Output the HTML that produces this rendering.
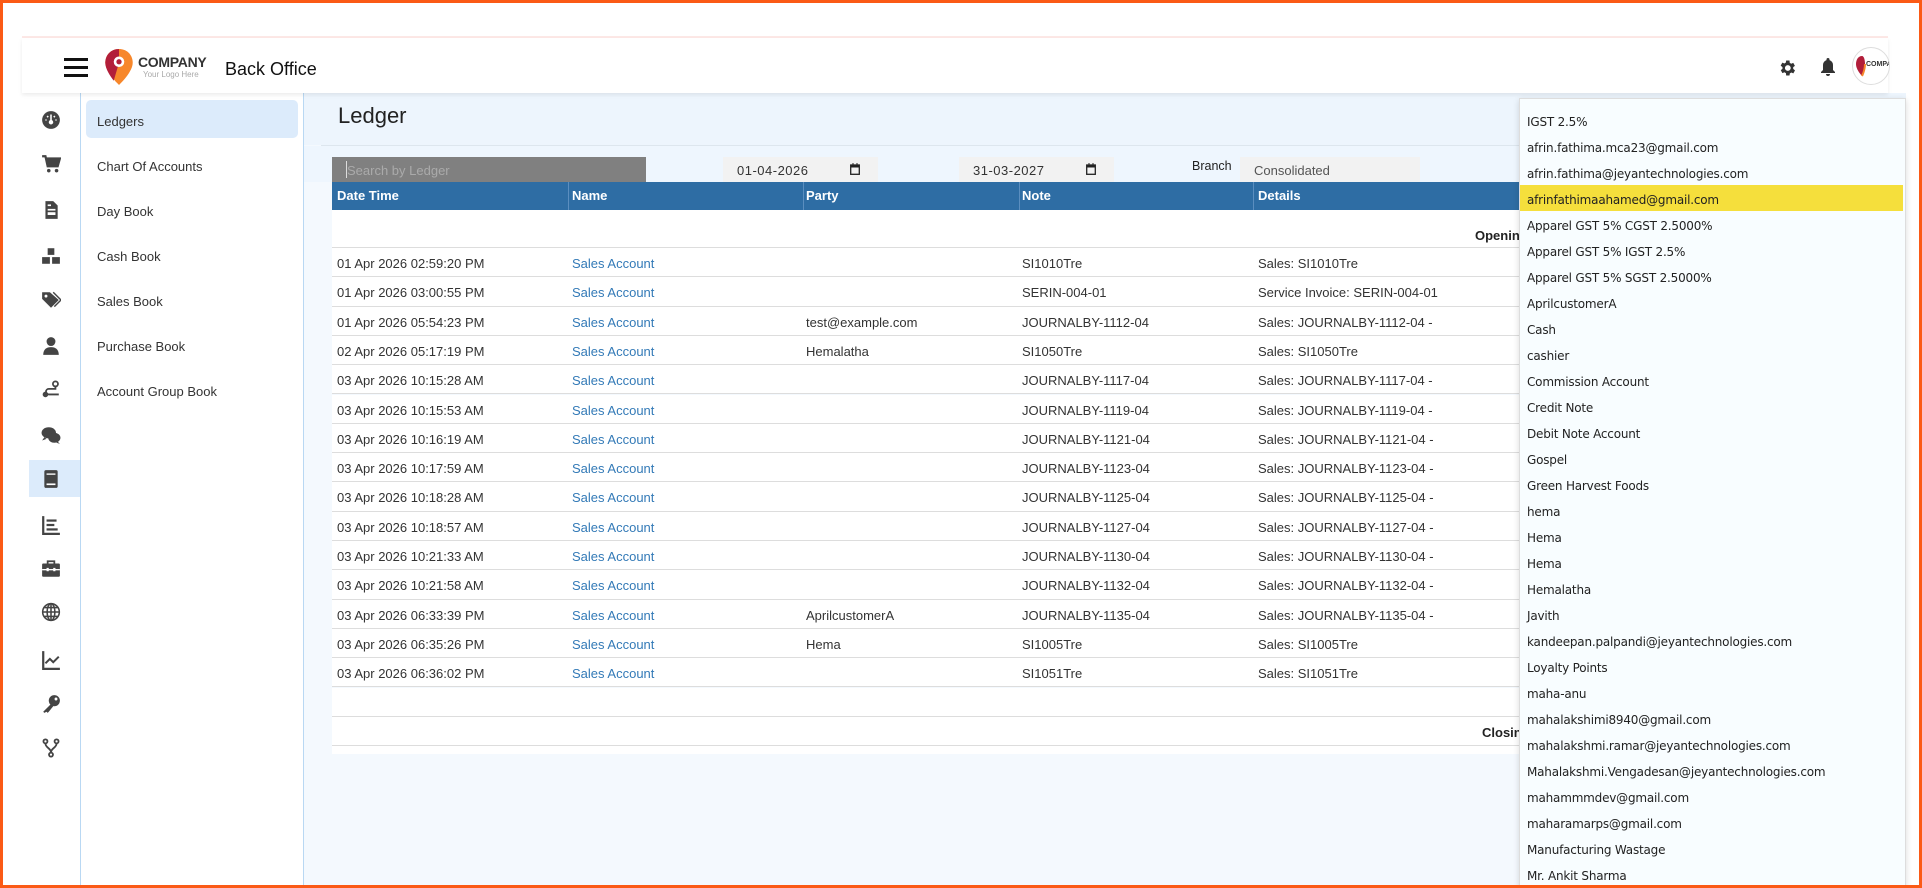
<!DOCTYPE html>
<html><head><meta charset="utf-8"><style>
*{margin:0;padding:0;box-sizing:border-box}
body{width:1922px;height:888px;overflow:hidden;background:#fff;font-family:"Liberation Sans",sans-serif;font-size:13px;color:#333;position:relative}
.a{position:absolute}
.frame{position:absolute;left:0;top:0;width:1922px;height:888px;border:3px solid #fb5a16;pointer-events:none;z-index:50}
.ic{position:absolute;left:41px;width:20px;height:20px}
.sub{position:absolute;left:97px;font-size:13px;color:#333}
.row{position:absolute;left:332px;width:1574px;height:29.3px;border-bottom:1px solid #ddd;background:#fff}
.row span{position:absolute;top:8px;white-space:nowrap}
.lnk{color:#337ab7}
.dd{position:absolute;left:1519px;top:98px;width:387px;height:790px;background:#f8fdff;border:1px solid #ddd;box-shadow:0 2px 6px rgba(0,0,0,.15);z-index:10;font-family:"DejaVu Sans",sans-serif;font-size:12px;color:#222;letter-spacing:-.2px}
.dd div{position:absolute;left:7px;white-space:nowrap}
</style></head><body>
<div class="frame"></div>
<div class="a" style="left:22px;top:36px;width:1866px;height:2px;background:#fde8e6"></div>
<div class="a" style="left:22px;top:38px;width:1866px;height:55px;background:#fff;box-shadow:0 2px 4px rgba(0,0,0,.08);z-index:2"></div>
<div class="a" style="left:64px;top:58px;width:24px;height:3px;background:#111;z-index:3;box-shadow:0 8px 0 #111,0 16px 0 #111"></div>
<svg class="a" style="left:104px;top:48px;z-index:3" width="30" height="38" viewBox="0 0 28 36"><path d="M14 1C6 1 1 7 1 14c0 9 13 21 13 21s13-12 13-21C27 7 22 1 14 1z" fill="#f7872b"/><path d="M14 1C6 1 1 7 1 14c0 6 5 13 8 17L14 14z" fill="#b21e3a"/><circle cx="14" cy="13" r="5" fill="#fff"/><circle cx="14" cy="13" r="2.5" fill="#b21e3a"/></svg>
<div class="a" style="left:138px;top:54px;font-weight:bold;font-size:14px;color:#333;z-index:3;letter-spacing:-.3px">COMPANY</div>
<div class="a" style="left:143px;top:70px;font-size:8px;color:#aaa;z-index:3">Your Logo Here</div>
<div class="a" style="left:225px;top:59px;font-size:18px;color:#111;z-index:3">Back Office</div>
<svg class="a" style="left:1777px;top:58px;z-index:3" width="20" height="20" viewBox="0 0 24 24"><path fill="#333" d="M19.4 13a7.5 7.5 0 000-2l2.1-1.6-2-3.5-2.5 1a7 7 0 00-1.7-1L15 3h-4l-.4 2.6a7 7 0 00-1.7 1l-2.5-1-2 3.5L6.6 11a7.5 7.5 0 000 2l-2.1 1.6 2 3.5 2.5-1a7 7 0 001.7 1L11 21h4l.4-2.6a7 7 0 001.7-1l2.5 1 2-3.5zM13 15.5a3.5 3.5 0 110-7 3.5 3.5 0 010 7z"/></svg>
<svg class="a" style="left:1820px;top:57px;z-index:3" width="16" height="20" viewBox="0 0 16 20"><path fill="#333" d="M8 1a1.5 1.5 0 011.5 1.5v.6A5 5 0 0113 8v5l2 2v1H1v-1l2-2V8a5 5 0 013.5-4.9v-.6A1.5 1.5 0 018 1zM6 17h4a2 2 0 01-4 0z"/></svg>
<div class="a" style="left:1852px;top:47px;width:38px;height:38px;border-radius:50%;border:1px solid #ddd;background:#fff;z-index:3;overflow:hidden"><svg width="36" height="36"><path d="M9 8c-4 0-6 4-6 8 0 6 6 12 6 12s3-6 3-12c0-4-1-8-3-8z" fill="#b21e3a"/><path d="M9 28s3-6 3-12" stroke="#f7872b" stroke-width="2" fill="none"/><text x="13" y="18" font-size="7" font-weight="bold" fill="#333" font-family="Liberation Sans">COMPANY</text></svg></div>
<div class="a" style="left:80px;top:93px;width:1px;height:795px;background:#b9d8f3"></div>
<div class="a" style="left:303px;top:93px;width:1px;height:795px;background:#b9d8f3"></div>
<div class="a" style="left:86px;top:100px;width:212px;height:38px;background:#dcebfb;border-radius:5px"></div>
<div class="a" style="left:29px;top:460px;width:51px;height:37px;background:#dcebfb"></div>
<div class="sub" style="top:114px">Ledgers</div>
<div class="sub" style="top:159px">Chart Of Accounts</div>
<div class="sub" style="top:204px">Day Book</div>
<div class="sub" style="top:249px">Cash Book</div>
<div class="sub" style="top:294px">Sales Book</div>
<div class="sub" style="top:339px">Purchase Book</div>
<div class="sub" style="top:384px">Account Group Book</div>
<svg class="ic" style="top:110px" viewBox="0 0 18 18"><circle cx="9" cy="9" r="8" fill="#444"/><circle cx="9" cy="11" r="2" fill="#fff"/><path d="M9 11V4M4 9h1M13 9h1M5.5 5.5l1 1M12.5 5.5l-1 1" stroke="#fff" stroke-width="1.4"/></svg>
<svg class="ic" style="top:154px" viewBox="0 0 18 18"><path d="M1 2h3l2 9h9l2-7H5" fill="none" stroke="#444" stroke-width="2"/><path d="M5 4h12l-2 7H6z" fill="#444"/><circle cx="7" cy="15" r="1.6" fill="#444"/><circle cx="14" cy="15" r="1.6" fill="#444"/></svg>
<svg class="ic" style="top:200px" viewBox="0 0 18 18"><path d="M4 1h7l4 4v12H4z" fill="#444"/><rect x="6" y="8" width="7" height="1.5" fill="#fff"/><rect x="6" y="11" width="7" height="2.5" fill="#fff"/><rect x="6" y="4" width="3" height="1.5" fill="#fff"/></svg>
<svg class="ic" style="top:246px" viewBox="0 0 18 18"><rect x="6" y="2" width="6" height="6" fill="#444"/><rect x="1" y="10" width="7" height="6" fill="#444"/><rect x="10" y="10" width="7" height="6" fill="#444"/></svg>
<svg class="ic" style="top:290px" viewBox="0 0 18 18"><path d="M1 2v6l8 8 7-7-8-7z" fill="#444"/><circle cx="4.5" cy="5.5" r="1.3" fill="#fff"/><path d="M11 2l7 7-6 6" fill="none" stroke="#444" stroke-width="1.3"/></svg>
<svg class="ic" style="top:336px" viewBox="0 0 18 18"><circle cx="9" cy="5" r="4" fill="#444"/><path d="M2 17c0-5 3-7 7-7s7 2 7 7z" fill="#444"/></svg>
<svg class="ic" style="top:380px" viewBox="0 0 18 18"><circle cx="13" cy="3.5" r="2.3" fill="none" stroke="#444" stroke-width="1.6"/><path d="M13 6v2H7a2.5 2.5 0 000 5h9" fill="none" stroke="#444" stroke-width="1.6"/><circle cx="4" cy="13" r="2.5" fill="#444"/></svg>
<svg class="ic" style="top:425px" viewBox="0 0 18 18"><ellipse cx="7" cy="7" rx="6.5" ry="5" fill="#444"/><ellipse cx="12" cy="11.5" rx="5.5" ry="4.5" fill="#444"/><path d="M3 11l-2 3 4-1.5z M15 15l2 2-3-1z" fill="#444"/></svg>
<svg class="ic" style="top:469px" viewBox="0 0 18 18"><rect x="3" y="1" width="12" height="16" rx="1.5" fill="#444"/><rect x="5" y="13" width="8" height="1.5" fill="#fff"/><rect x="5" y="4" width="8" height="1.2" fill="#fff"/></svg>
<svg class="ic" style="top:515px" viewBox="0 0 18 18"><path d="M2 1v16h15" fill="none" stroke="#444" stroke-width="2"/><rect x="5" y="4" width="9" height="2" fill="#444"/><rect x="5" y="8" width="7" height="2" fill="#444"/><rect x="5" y="12" width="10" height="2" fill="#444"/></svg>
<svg class="ic" style="top:559px" viewBox="0 0 18 18"><path d="M6 4V2h6v2" fill="none" stroke="#444" stroke-width="1.6"/><rect x="1" y="4" width="16" height="12" rx="1" fill="#444"/><rect x="1" y="9" width="16" height="1.2" fill="#fff"/><rect x="5" y="8" width="2" height="3" fill="#fff"/><rect x="11" y="8" width="2" height="3" fill="#fff"/></svg>
<svg class="ic" style="top:602px" viewBox="0 0 18 18"><g fill="none" stroke="#444" stroke-width="1.4"><circle cx="9" cy="9" r="7.5"/><ellipse cx="9" cy="9" rx="3.5" ry="7.5"/><path d="M1.5 9h15M3 5h12M3 13h12M9 1.5v15"/></g></svg>
<svg class="ic" style="top:650px" viewBox="0 0 18 18"><path d="M2 1v16h15" fill="none" stroke="#444" stroke-width="2"/><path d="M4 12l4-4 3 3 5-5" fill="none" stroke="#444" stroke-width="1.8"/></svg>
<svg class="ic" style="top:694px" viewBox="0 0 18 18"><circle cx="12" cy="6" r="5" fill="#444"/><path d="M9 9l-7 7 1 1 2-1 1 1 1-1 4-5z" fill="#444"/><circle cx="13.5" cy="4.5" r="1.3" fill="#fff"/></svg>
<svg class="ic" style="top:738px" viewBox="0 0 18 18"><g fill="none" stroke="#444" stroke-width="1.6"><circle cx="4" cy="3" r="1.8"/><circle cx="14" cy="3" r="1.8"/><circle cx="9" cy="15" r="1.8"/><path d="M4 5c0 4 5 4 5 8M14 5c0 4-5 4-5 8"/></g></svg>
<div class="a" style="left:304px;top:93px;width:1602px;height:795px;background:#f4f9fe"></div>
<div class="a" style="left:304px;top:93px;width:1602px;height:52px;background:#edf5fd"></div>
<div class="a" style="left:338px;top:103px;font-size:22px;color:#222">Ledger</div>
<div class="a" style="left:321px;top:145px;width:1585px;height:1px;background:#dde6ee"></div>
<div class="a" style="left:304px;top:146px;width:1602px;height:36px;background:#eef6fe"></div>
<div class="a" style="left:332px;top:157px;width:314px;height:25px;background:#808080"></div>
<div class="a" style="left:346px;top:161px;width:1px;height:17px;background:#ddd"></div>
<div class="a" style="left:347px;top:163px;color:#aaa;font-size:13px">Search by Ledger</div>
<div class="a" style="left:723px;top:157px;width:155px;height:25px;background:#f2f2f2"></div>
<div class="a" style="left:737px;top:163px;font-size:13px;color:#333;letter-spacing:.5px">01-04-2026</div>
<svg class="a" style="left:850px;top:163px" width="10" height="12" viewBox="0 0 10 12"><rect x=".7" y="2" width="8.6" height="9.3" fill="none" stroke="#222" stroke-width="1.3"/><rect x=".7" y="2" width="8.6" height="2.5" fill="#222"/><rect x="2.5" y="0" width="1" height="2" fill="#222"/><rect x="6.5" y="0" width="1" height="2" fill="#222"/></svg>
<div class="a" style="left:959px;top:157px;width:155px;height:25px;background:#f2f2f2"></div>
<div class="a" style="left:973px;top:163px;font-size:13px;color:#333;letter-spacing:.5px">31-03-2027</div>
<svg class="a" style="left:1086px;top:163px" width="10" height="12" viewBox="0 0 10 12"><rect x=".7" y="2" width="8.6" height="9.3" fill="none" stroke="#222" stroke-width="1.3"/><rect x=".7" y="2" width="8.6" height="2.5" fill="#222"/><rect x="2.5" y="0" width="1" height="2" fill="#222"/><rect x="6.5" y="0" width="1" height="2" fill="#222"/></svg>
<div class="a" style="left:1192px;top:159px;font-size:12.5px;color:#222">Branch</div>
<div class="a" style="left:1240px;top:157px;width:180px;height:25px;background:#f2f2f2"></div>
<div class="a" style="left:1254px;top:163px;font-size:13px;color:#555">Consolidated</div>
<div class="a" style="left:332px;top:182px;width:1574px;height:28px;background:#2e6da4;color:#fff;font-weight:bold;font-size:13px">
<span class="a" style="left:5px;top:6px">Date Time</span>
<span class="a" style="left:236px;top:0;width:1px;height:28px;background:#5b8ebf"></span><span class="a" style="left:240px;top:6px">Name</span>
<span class="a" style="left:471px;top:0;width:1px;height:28px;background:#5b8ebf"></span><span class="a" style="left:474px;top:6px">Party</span>
<span class="a" style="left:687px;top:0;width:1px;height:28px;background:#5b8ebf"></span><span class="a" style="left:690px;top:6px">Note</span>
<span class="a" style="left:921px;top:0;width:1px;height:28px;background:#5b8ebf"></span><span class="a" style="left:926px;top:6px">Details</span>
</div>
<div class="row" style="top:210px;height:38px"><span style="left:1143px;top:18px;font-weight:bold;color:#222">Opening</span></div>
<div class="row" style="top:248px"><span style="left:5px">01 Apr 2026 02:59:20 PM</span><span class="lnk" style="left:240px">Sales Account</span><span style="left:690px">SI1010Tre</span><span style="left:926px">Sales: SI1010Tre</span></div>
<div class="row" style="top:277.3px"><span style="left:5px">01 Apr 2026 03:00:55 PM</span><span class="lnk" style="left:240px">Sales Account</span><span style="left:690px">SERIN-004-01</span><span style="left:926px">Service Invoice: SERIN-004-01</span></div>
<div class="row" style="top:306.6px"><span style="left:5px">01 Apr 2026 05:54:23 PM</span><span class="lnk" style="left:240px">Sales Account</span><span style="left:474px">test@example.com</span><span style="left:690px">JOURNALBY-1112-04</span><span style="left:926px">Sales: JOURNALBY-1112-04 -</span></div>
<div class="row" style="top:335.9px"><span style="left:5px">02 Apr 2026 05:17:19 PM</span><span class="lnk" style="left:240px">Sales Account</span><span style="left:474px">Hemalatha</span><span style="left:690px">SI1050Tre</span><span style="left:926px">Sales: SI1050Tre</span></div>
<div class="row" style="top:365.2px"><span style="left:5px">03 Apr 2026 10:15:28 AM</span><span class="lnk" style="left:240px">Sales Account</span><span style="left:690px">JOURNALBY-1117-04</span><span style="left:926px">Sales: JOURNALBY-1117-04 -</span></div>
<div class="row" style="top:394.5px"><span style="left:5px">03 Apr 2026 10:15:53 AM</span><span class="lnk" style="left:240px">Sales Account</span><span style="left:690px">JOURNALBY-1119-04</span><span style="left:926px">Sales: JOURNALBY-1119-04 -</span></div>
<div class="row" style="top:423.8px"><span style="left:5px">03 Apr 2026 10:16:19 AM</span><span class="lnk" style="left:240px">Sales Account</span><span style="left:690px">JOURNALBY-1121-04</span><span style="left:926px">Sales: JOURNALBY-1121-04 -</span></div>
<div class="row" style="top:453.1px"><span style="left:5px">03 Apr 2026 10:17:59 AM</span><span class="lnk" style="left:240px">Sales Account</span><span style="left:690px">JOURNALBY-1123-04</span><span style="left:926px">Sales: JOURNALBY-1123-04 -</span></div>
<div class="row" style="top:482.4px"><span style="left:5px">03 Apr 2026 10:18:28 AM</span><span class="lnk" style="left:240px">Sales Account</span><span style="left:690px">JOURNALBY-1125-04</span><span style="left:926px">Sales: JOURNALBY-1125-04 -</span></div>
<div class="row" style="top:511.7px"><span style="left:5px">03 Apr 2026 10:18:57 AM</span><span class="lnk" style="left:240px">Sales Account</span><span style="left:690px">JOURNALBY-1127-04</span><span style="left:926px">Sales: JOURNALBY-1127-04 -</span></div>
<div class="row" style="top:541px"><span style="left:5px">03 Apr 2026 10:21:33 AM</span><span class="lnk" style="left:240px">Sales Account</span><span style="left:690px">JOURNALBY-1130-04</span><span style="left:926px">Sales: JOURNALBY-1130-04 -</span></div>
<div class="row" style="top:570.3px"><span style="left:5px">03 Apr 2026 10:21:58 AM</span><span class="lnk" style="left:240px">Sales Account</span><span style="left:690px">JOURNALBY-1132-04</span><span style="left:926px">Sales: JOURNALBY-1132-04 -</span></div>
<div class="row" style="top:599.6px"><span style="left:5px">03 Apr 2026 06:33:39 PM</span><span class="lnk" style="left:240px">Sales Account</span><span style="left:474px">AprilcustomerA</span><span style="left:690px">JOURNALBY-1135-04</span><span style="left:926px">Sales: JOURNALBY-1135-04 -</span></div>
<div class="row" style="top:628.9px"><span style="left:5px">03 Apr 2026 06:35:26 PM</span><span class="lnk" style="left:240px">Sales Account</span><span style="left:474px">Hema</span><span style="left:690px">SI1005Tre</span><span style="left:926px">Sales: SI1005Tre</span></div>
<div class="row" style="top:658.2px"><span style="left:5px">03 Apr 2026 06:36:02 PM</span><span class="lnk" style="left:240px">Sales Account</span><span style="left:690px">SI1051Tre</span><span style="left:926px">Sales: SI1051Tre</span></div>
<div class="row" style="top:687.5px"></div>
<div class="row" style="top:716.8px"><span style="left:1150px;font-weight:bold;color:#222">Closing</span></div>
<div class="a" style="left:332px;top:746px;width:1574px;height:8px;background:#fff"></div>
<div class="dd">
<div style="top:16px">IGST 2.5%</div>
<div style="top:42px">afrin.fathima.mca23@gmail.com</div>
<div style="top:68px">afrin.fathima@jeyantechnologies.com</div>
<div style="top:86px;left:0;width:383px;height:26px;background:#f5df3c"></div>
<div style="top:94px">afrinfathimaahamed@gmail.com</div>
<div style="top:120px">Apparel GST 5% CGST 2.5000%</div>
<div style="top:146px">Apparel GST 5% IGST 2.5%</div>
<div style="top:172px">Apparel GST 5% SGST 2.5000%</div>
<div style="top:198px">AprilcustomerA</div>
<div style="top:224px">Cash</div>
<div style="top:250px">cashier</div>
<div style="top:276px">Commission Account</div>
<div style="top:302px">Credit Note</div>
<div style="top:328px">Debit Note Account</div>
<div style="top:354px">Gospel</div>
<div style="top:380px">Green Harvest Foods</div>
<div style="top:406px">hema</div>
<div style="top:432px">Hema</div>
<div style="top:458px">Hema</div>
<div style="top:484px">Hemalatha</div>
<div style="top:510px">Javith</div>
<div style="top:536px">kandeepan.palpandi@jeyantechnologies.com</div>
<div style="top:562px">Loyalty Points</div>
<div style="top:588px">maha-anu</div>
<div style="top:614px">mahalakshimi8940@gmail.com</div>
<div style="top:640px">mahalakshmi.ramar@jeyantechnologies.com</div>
<div style="top:666px">Mahalakshmi.Vengadesan@jeyantechnologies.com</div>
<div style="top:692px">mahammmdev@gmail.com</div>
<div style="top:718px">maharamarps@gmail.com</div>
<div style="top:744px">Manufacturing Wastage</div>
<div style="top:770px">Mr. Ankit Sharma</div>
</div>
</body></html>
